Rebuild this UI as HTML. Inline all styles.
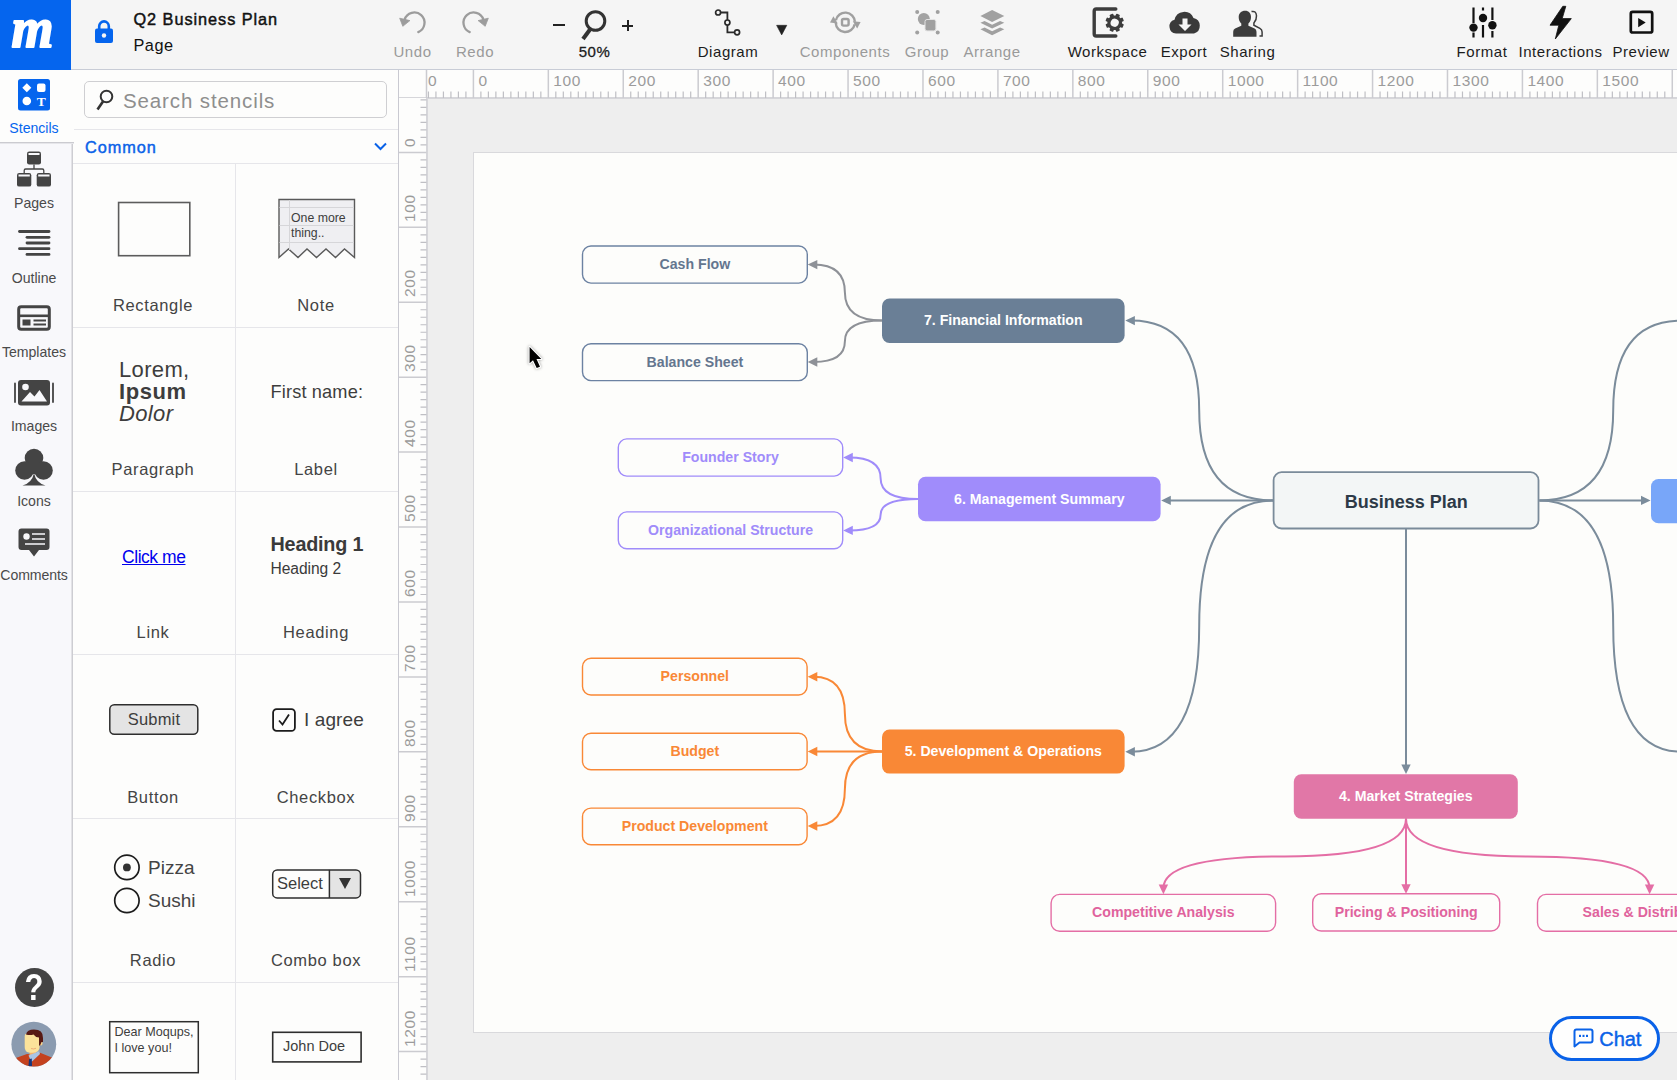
<!DOCTYPE html>
<html lang="en">
<head>
<meta charset="utf-8">
<title>Q2 Business Plan</title>
<style>
*{box-sizing:border-box;margin:0;padding:0}
html,body{width:1677px;height:1080px;overflow:hidden;background:#eeeeee;font-family:"Liberation Sans",sans-serif;color:#222}
.abs{position:absolute}
#top{position:absolute;left:0;top:0;width:1677px;height:70px;background:#f5f5f5;border-bottom:1px solid #c8ccd6}
#logo{position:absolute;left:0;top:0;width:71px;height:70px;background:#0565ee}
.tb{position:absolute;top:43px;font-size:15px;line-height:17px;white-space:nowrap;transform:translateX(-50%);color:#1c1c1c;letter-spacing:.55px}
.tb.dis{color:#9a9a9a}
.ti{position:absolute}
#nav{position:absolute;left:0;top:70px;width:73px;height:1010px;background:#f8f8fb;border-right:1px solid #cdcdd2;box-shadow:inset -2px 0 0 -1px #e2e2e6}
#navsel{position:absolute;left:0;top:70px;width:74px;height:73px;background:#fdfdfc;border-bottom:1px solid #cbcbd0;box-shadow:0 1px 0 #e6e6ea}
.nl{position:absolute;left:0;width:68px;text-align:center;font-size:14.1px;line-height:16px;color:#4a4a4a;white-space:nowrap}
#panel{position:absolute;left:73px;top:70px;width:325px;height:1010px;background:#fdfdfc}
#panelb{position:absolute;left:398px;top:70px;width:1px;height:1010px;background:#c9c9d1}
.hl{position:absolute;left:73px;width:325px;height:1px;background:#e6e6ea}
.cl{position:absolute;width:325px;left:73px}
.lab{position:absolute;width:162px;text-align:center;font-size:16.5px;line-height:20px;color:#444;letter-spacing:.65px;white-space:nowrap}
#hr{position:absolute;left:399px;top:70px;width:1278px;height:29px;background:#fdfdfc;border-bottom:2px solid #d6d6da}
#vr{position:absolute;left:399px;top:98px;width:29px;height:982px;background:#fdfdfc;border-right:2px solid #d6d6da}
.rl{position:absolute;font-size:15.500px;line-height:16px;color:#9b9b9b;white-space:nowrap;letter-spacing:.6px}
.vl{position:absolute;font-size:15.500px;line-height:16px;color:#9b9b9b;white-space:nowrap;letter-spacing:.6px;transform-origin:0 0;transform:rotate(-90deg)}
#page{position:absolute;left:473px;top:152px;width:1210px;height:881px;background:#fdfdfb;border:1px solid #d9d9dc}
svg text{font-family:"Liberation Sans",sans-serif}
</style>
</head>
<body>
<div id="page"></div>
<svg class="abs" style="left:0;top:0" width="1677" height="1080" viewBox="0 0 1677 1080" font-size="14.15" font-weight="bold"><path d="M1273.2 500.4Q1199.2 500.4 1199.2 410.5Q1199.2 320.6 1131.3 320.6" fill="none" stroke="#7b8c9b" stroke-width="2.0"/><path d="M1125.3 320.6L1134.9 315.9L1134.9 325.3Z" fill="#7b8c9b"/>
<path d="M1273.2 500.4L1167.2 500.4" fill="none" stroke="#7b8c9b" stroke-width="2.0"/><path d="M1161.2 500.4L1170.8 495.7L1170.8 505.1Z" fill="#7b8c9b"/>
<path d="M1273.2 500.4Q1199.2 500.4 1199.2 626.0Q1199.2 751.7 1131.3 751.7" fill="none" stroke="#7b8c9b" stroke-width="2.0"/><path d="M1125.3 751.7L1134.9 747.0L1134.9 756.4Z" fill="#7b8c9b"/>
<path d="M1539.3 500.4Q1613.2 500.4 1613.2 410.5Q1613.2 320.6 1681.2 320.6" fill="none" stroke="#7b8c9b" stroke-width="2.0"/><path d="M1687.2 320.6L1677.6 325.3L1677.6 315.9Z" fill="#7b8c9b"/>
<path d="M1539.3 500.4L1644.6 500.4" fill="none" stroke="#7b8c9b" stroke-width="2.0"/><path d="M1650.6 500.4L1641.0 505.1L1641.0 495.7Z" fill="#7b8c9b"/>
<path d="M1539.3 500.4Q1613.2 500.4 1613.2 626.0Q1613.2 751.7 1681.2 751.7" fill="none" stroke="#7b8c9b" stroke-width="2.0"/><path d="M1687.2 751.7L1677.6 756.4L1677.6 747.0Z" fill="#7b8c9b"/>
<path d="M1406.0 529.0L1406.0 768.0" fill="none" stroke="#7b8c9b" stroke-width="2.0"/><path d="M1406.0 774.0L1401.3 764.4L1410.7 764.4Z" fill="#7b8c9b"/>
<path d="M882.0 320.6Q844.9 320.6 844.9 292.6Q844.9 264.6 813.7 264.6" fill="none" stroke="#8e9197" stroke-width="2.0"/><path d="M807.7 264.6L817.3 259.9L817.3 269.3Z" fill="#8e9197"/>
<path d="M882.0 320.6Q844.9 320.6 844.9 341.3Q844.9 362.0 813.7 362.0" fill="none" stroke="#8e9197" stroke-width="2.0"/><path d="M807.7 362.0L817.3 357.3L817.3 366.7Z" fill="#8e9197"/>
<path d="M918.0 499.0Q880.6 499.0 880.6 478.2Q880.6 457.5 849.2 457.5" fill="none" stroke="#a08cfa" stroke-width="2.0"/><path d="M843.2 457.5L852.8 452.8L852.8 462.2Z" fill="#a08cfa"/>
<path d="M918.0 499.0Q880.6 499.0 880.6 514.7Q880.6 530.4 849.2 530.4" fill="none" stroke="#a08cfa" stroke-width="2.0"/><path d="M843.2 530.4L852.8 525.7L852.8 535.1Z" fill="#a08cfa"/>
<path d="M882.0 751.5Q844.9 751.5 844.9 714.1Q844.9 676.8 813.7 676.8" fill="none" stroke="#f98836" stroke-width="2.0"/><path d="M807.7 676.8L817.3 672.1L817.3 681.5Z" fill="#f98836"/>
<path d="M882.0 751.5L813.7 751.5" fill="none" stroke="#f98836" stroke-width="2.0"/><path d="M807.7 751.5L817.3 746.8L817.3 756.2Z" fill="#f98836"/>
<path d="M882.0 751.5Q844.9 751.5 844.9 788.8Q844.9 826.0 813.7 826.0" fill="none" stroke="#f98836" stroke-width="2.0"/><path d="M807.7 826.0L817.3 821.3L817.3 830.7Z" fill="#f98836"/>
<path d="M1406.0 818.5Q1406.0 856.4 1284.7 856.4Q1163.4 856.4 1163.4 888.2" fill="none" stroke="#e46ea5" stroke-width="2.0"/><path d="M1163.4 894.2L1158.7 884.6L1168.1 884.6Z" fill="#e46ea5"/>
<path d="M1406.0 818.5L1406.0 887.8" fill="none" stroke="#e46ea5" stroke-width="2.0"/><path d="M1406.0 893.8L1401.3 884.2L1410.7 884.2Z" fill="#e46ea5"/>
<path d="M1406.0 818.5Q1406.0 856.4 1527.8 856.4Q1649.6 856.4 1649.6 888.2" fill="none" stroke="#e46ea5" stroke-width="2.0"/><path d="M1649.6 894.2L1644.9 884.6L1654.3 884.6Z" fill="#e46ea5"/>
<rect x="582.5" y="246.0" width="224.8" height="37.1" rx="8.5" fill="#fdfdfb" stroke="#6c82a2" stroke-width="1.4"/><text x="694.9" y="269.1" text-anchor="middle" fill="#64768f">Cash Flow</text>
<rect x="582.5" y="343.7" width="224.8" height="36.9" rx="8.5" fill="#fdfdfb" stroke="#6c82a2" stroke-width="1.4"/><text x="694.9" y="366.6" text-anchor="middle" fill="#64768f">Balance Sheet</text>
<rect x="882.0" y="298.5" width="242.6" height="44.5" rx="7.5" fill="#6a7f96"/><text x="1003.3" y="325.2" text-anchor="middle" fill="#fff">7. Financial Information</text>
<rect x="618.3" y="438.9" width="224.4" height="37.2" rx="8.5" fill="#fdfdfb" stroke="#a08cfa" stroke-width="1.4"/><text x="730.5" y="462.0" text-anchor="middle" fill="#a08cfa">Founder Story</text>
<rect x="618.3" y="511.9" width="224.4" height="36.9" rx="8.5" fill="#fdfdfb" stroke="#a08cfa" stroke-width="1.4"/><text x="730.5" y="534.9" text-anchor="middle" fill="#a08cfa">Organizational Structure</text>
<rect x="918.0" y="476.7" width="242.6" height="44.6" rx="7.5" fill="#a08cfb"/><text x="1039.3" y="503.5" text-anchor="middle" fill="#fff">6. Management Summary</text>
<rect x="582.5" y="658.3" width="224.6" height="36.7" rx="8.5" fill="#fdfdfb" stroke="#f98836" stroke-width="1.4"/><text x="694.8" y="681.2" text-anchor="middle" fill="#f98836">Personnel</text>
<rect x="582.5" y="733.3" width="224.6" height="36.5" rx="8.5" fill="#fdfdfb" stroke="#f98836" stroke-width="1.4"/><text x="694.8" y="756.0" text-anchor="middle" fill="#f98836">Budget</text>
<rect x="582.5" y="808.1" width="224.6" height="36.6" rx="8.5" fill="#fdfdfb" stroke="#f98836" stroke-width="1.4"/><text x="694.8" y="830.9" text-anchor="middle" fill="#f98836">Product Development</text>
<rect x="882.0" y="729.6" width="242.6" height="44.0" rx="7.5" fill="#f98836"/><text x="1003.3" y="756.1" text-anchor="middle" fill="#fff">5. Development &amp; Operations</text>
<rect x="1293.8" y="774.2" width="224.0" height="44.6" rx="7.5" fill="#e177a7"/><text x="1405.8" y="801.0" text-anchor="middle" fill="#fff">4. Market Strategies</text>
<rect x="1051.1" y="894.4" width="224.5" height="36.9" rx="8.5" fill="#fdfdfb" stroke="#e46ea5" stroke-width="1.4"/><text x="1163.3" y="917.4" text-anchor="middle" fill="#e0639d">Competitive Analysis</text>
<rect x="1312.7" y="893.7" width="187.0" height="37.3" rx="8.5" fill="#fdfdfb" stroke="#e46ea5" stroke-width="1.4"/><text x="1406.2" y="916.9" text-anchor="middle" fill="#e0639d">Pricing &amp; Positioning</text>
<rect x="1537.5" y="894.4" width="224.6" height="36.9" rx="8.5" fill="#fdfdfb" stroke="#e46ea5" stroke-width="1.4"/><text x="1649.8" y="917.4" text-anchor="middle" fill="#e0639d">Sales &amp; Distribution</text>
<rect x="1651" y="479" width="60" height="44.300" rx="7.500" fill="#78a6f9"/>
<rect x="1273.600" y="472.200" width="264.900" height="56.300" rx="8" fill="#f3f6f6" stroke="#7a8b9a" stroke-width="1.800"/><text x="1406.300" y="507.800" text-anchor="middle" fill="#2d3a47" style="font-size:18px">Business Plan</text></svg>
<div id="hr"></div><div id="vr"></div>
<svg class="abs" style="left:0;top:0" width="1677" height="1080" viewBox="0 0 1677 1080"><path d="M428.44 91.5V98M435.93 91.5V98M443.43 91.5V98M450.92 91.5V98M458.41 91.5V98M465.91 91.5V98M480.89 91.5V98M488.39 91.5V98M495.88 91.5V98M503.37 91.5V98M510.87 91.5V98M518.36 91.5V98M525.85 91.5V98M533.34 91.5V98M540.84 91.5V98M555.82 91.5V98M563.32 91.5V98M570.81 91.5V98M578.30 91.5V98M585.79 91.5V98M593.29 91.5V98M600.78 91.5V98M608.27 91.5V98M615.77 91.5V98M630.75 91.5V98M638.25 91.5V98M645.74 91.5V98M653.23 91.5V98M660.73 91.5V98M668.22 91.5V98M675.71 91.5V98M683.20 91.5V98M690.70 91.5V98M705.68 91.5V98M713.18 91.5V98M720.67 91.5V98M728.16 91.5V98M735.65 91.5V98M743.15 91.5V98M750.64 91.5V98M758.13 91.5V98M765.63 91.5V98M780.61 91.5V98M788.11 91.5V98M795.60 91.5V98M803.09 91.5V98M810.59 91.5V98M818.08 91.5V98M825.57 91.5V98M833.06 91.5V98M840.56 91.5V98M855.54 91.5V98M863.04 91.5V98M870.53 91.5V98M878.02 91.5V98M885.52 91.5V98M893.01 91.5V98M900.50 91.5V98M907.99 91.5V98M915.49 91.5V98M930.47 91.5V98M937.97 91.5V98M945.46 91.5V98M952.95 91.5V98M960.45 91.5V98M967.94 91.5V98M975.43 91.5V98M982.92 91.5V98M990.42 91.5V98M1005.40 91.5V98M1012.90 91.5V98M1020.39 91.5V98M1027.88 91.5V98M1035.38 91.5V98M1042.87 91.5V98M1050.36 91.5V98M1057.85 91.5V98M1065.35 91.5V98M1080.33 91.5V98M1087.83 91.5V98M1095.32 91.5V98M1102.81 91.5V98M1110.30 91.5V98M1117.80 91.5V98M1125.29 91.5V98M1132.78 91.5V98M1140.28 91.5V98M1155.26 91.5V98M1162.76 91.5V98M1170.25 91.5V98M1177.74 91.5V98M1185.24 91.5V98M1192.73 91.5V98M1200.22 91.5V98M1207.71 91.5V98M1215.21 91.5V98M1230.19 91.5V98M1237.69 91.5V98M1245.18 91.5V98M1252.67 91.5V98M1260.16 91.5V98M1267.66 91.5V98M1275.15 91.5V98M1282.64 91.5V98M1290.14 91.5V98M1305.12 91.5V98M1312.62 91.5V98M1320.11 91.5V98M1327.60 91.5V98M1335.10 91.5V98M1342.59 91.5V98M1350.08 91.5V98M1357.57 91.5V98M1365.07 91.5V98M1380.05 91.5V98M1387.55 91.5V98M1395.04 91.5V98M1402.53 91.5V98M1410.03 91.5V98M1417.52 91.5V98M1425.01 91.5V98M1432.50 91.5V98M1440.00 91.5V98M1454.98 91.5V98M1462.48 91.5V98M1469.97 91.5V98M1477.46 91.5V98M1484.95 91.5V98M1492.45 91.5V98M1499.94 91.5V98M1507.43 91.5V98M1514.93 91.5V98M1529.91 91.5V98M1537.41 91.5V98M1544.90 91.5V98M1552.39 91.5V98M1559.89 91.5V98M1567.38 91.5V98M1574.87 91.5V98M1582.36 91.5V98M1589.86 91.5V98M1604.84 91.5V98M1612.34 91.5V98M1619.83 91.5V98M1627.32 91.5V98M1634.82 91.5V98M1642.31 91.5V98M1649.80 91.5V98M1657.29 91.5V98M1664.79 91.5V98" stroke="#bfbfc4" stroke-width="1.200" fill="none"/><path d="M426.5 70V98M473.40 70V98M548.33 70V98M623.26 70V98M698.19 70V98M773.12 70V98M848.05 70V98M922.98 70V98M997.91 70V98M1072.84 70V98M1147.77 70V98M1222.70 70V98M1297.63 70V98M1372.56 70V98M1447.49 70V98M1522.42 70V98M1597.35 70V98M1672.28 70V98" stroke="#cbcbd0" stroke-width="1.500" fill="none"/><path d="M420.500 99.95H426.500M420.500 107.44H426.500M420.500 114.94H426.500M420.500 122.43H426.500M420.500 129.92H426.500M420.500 137.41H426.500M420.500 144.91H426.500M420.500 159.89H426.500M420.500 167.39H426.500M420.500 174.88H426.500M420.500 182.37H426.500M420.500 189.87H426.500M420.500 197.36H426.500M420.500 204.85H426.500M420.500 212.34H426.500M420.500 219.84H426.500M420.500 234.82H426.500M420.500 242.32H426.500M420.500 249.81H426.500M420.500 257.30H426.500M420.500 264.80H426.500M420.500 272.29H426.500M420.500 279.78H426.500M420.500 287.27H426.500M420.500 294.77H426.500M420.500 309.75H426.500M420.500 317.25H426.500M420.500 324.74H426.500M420.500 332.23H426.500M420.500 339.73H426.500M420.500 347.22H426.500M420.500 354.71H426.500M420.500 362.20H426.500M420.500 369.70H426.500M420.500 384.68H426.500M420.500 392.18H426.500M420.500 399.67H426.500M420.500 407.16H426.500M420.500 414.65H426.500M420.500 422.15H426.500M420.500 429.64H426.500M420.500 437.13H426.500M420.500 444.63H426.500M420.500 459.61H426.500M420.500 467.11H426.500M420.500 474.60H426.500M420.500 482.09H426.500M420.500 489.59H426.500M420.500 497.08H426.500M420.500 504.57H426.500M420.500 512.06H426.500M420.500 519.56H426.500M420.500 534.54H426.500M420.500 542.04H426.500M420.500 549.53H426.500M420.500 557.02H426.500M420.500 564.52H426.500M420.500 572.01H426.500M420.500 579.50H426.500M420.500 586.99H426.500M420.500 594.49H426.500M420.500 609.47H426.500M420.500 616.97H426.500M420.500 624.46H426.500M420.500 631.95H426.500M420.500 639.45H426.500M420.500 646.94H426.500M420.500 654.43H426.500M420.500 661.92H426.500M420.500 669.42H426.500M420.500 684.40H426.500M420.500 691.90H426.500M420.500 699.39H426.500M420.500 706.88H426.500M420.500 714.38H426.500M420.500 721.87H426.500M420.500 729.36H426.500M420.500 736.85H426.500M420.500 744.35H426.500M420.500 759.33H426.500M420.500 766.83H426.500M420.500 774.32H426.500M420.500 781.81H426.500M420.500 789.30H426.500M420.500 796.80H426.500M420.500 804.29H426.500M420.500 811.78H426.500M420.500 819.28H426.500M420.500 834.26H426.500M420.500 841.76H426.500M420.500 849.25H426.500M420.500 856.74H426.500M420.500 864.24H426.500M420.500 871.73H426.500M420.500 879.22H426.500M420.500 886.71H426.500M420.500 894.21H426.500M420.500 909.19H426.500M420.500 916.69H426.500M420.500 924.18H426.500M420.500 931.67H426.500M420.500 939.17H426.500M420.500 946.66H426.500M420.500 954.15H426.500M420.500 961.64H426.500M420.500 969.14H426.500M420.500 984.12H426.500M420.500 991.62H426.500M420.500 999.11H426.500M420.500 1006.60H426.500M420.500 1014.10H426.500M420.500 1021.59H426.500M420.500 1029.08H426.500M420.500 1036.57H426.500M420.500 1044.07H426.500M420.500 1059.05H426.500M420.500 1066.55H426.500M420.500 1074.04H426.500" stroke="#bfbfc4" stroke-width="1.200" fill="none"/><path d="M399 152.40H426.500M399 227.33H426.500M399 302.26H426.500M399 377.19H426.500M399 452.12H426.500M399 527.05H426.500M399 601.98H426.500M399 676.91H426.500M399 751.84H426.500M399 826.77H426.500M399 901.70H426.500M399 976.63H426.500M399 1051.56H426.500" stroke="#cbcbd0" stroke-width="1.500" fill="none"/></svg>
<div class="rl" style="left:428px;top:73.3px">0</div>
<div class="rl" style="left:478.4px;top:73.3px">0</div>
<div class="rl" style="left:553.3px;top:73.3px">100</div>
<div class="rl" style="left:628.3px;top:73.3px">200</div>
<div class="rl" style="left:703.2px;top:73.3px">300</div>
<div class="rl" style="left:778.1px;top:73.3px">400</div>
<div class="rl" style="left:853.0px;top:73.3px">500</div>
<div class="rl" style="left:928.0px;top:73.3px">600</div>
<div class="rl" style="left:1002.9px;top:73.3px">700</div>
<div class="rl" style="left:1077.8px;top:73.3px">800</div>
<div class="rl" style="left:1152.8px;top:73.3px">900</div>
<div class="rl" style="left:1227.7px;top:73.3px">1000</div>
<div class="rl" style="left:1302.6px;top:73.3px">1100</div>
<div class="rl" style="left:1377.6px;top:73.3px">1200</div>
<div class="rl" style="left:1452.5px;top:73.3px">1300</div>
<div class="rl" style="left:1527.4px;top:73.3px">1400</div>
<div class="rl" style="left:1602.3px;top:73.3px">1500</div>
<div class="rl" style="left:1677.3px;top:73.3px">1600</div>
<div class="vl" style="left:401.6px;top:147.4px">0</div>
<div class="vl" style="left:401.6px;top:222.3px">100</div>
<div class="vl" style="left:401.6px;top:297.3px">200</div>
<div class="vl" style="left:401.6px;top:372.2px">300</div>
<div class="vl" style="left:401.6px;top:447.1px">400</div>
<div class="vl" style="left:401.6px;top:522.1px">500</div>
<div class="vl" style="left:401.6px;top:597.0px">600</div>
<div class="vl" style="left:401.6px;top:671.9px">700</div>
<div class="vl" style="left:401.6px;top:746.8px">800</div>
<div class="vl" style="left:401.6px;top:821.8px">900</div>
<div class="vl" style="left:401.6px;top:896.7px">1000</div>
<div class="vl" style="left:401.6px;top:971.6px">1100</div>
<div class="vl" style="left:401.6px;top:1046.6px">1200</div>
<div id="panel"></div>
<div id="panelb"></div>
<!-- search -->
<div class="abs" style="left:84px;top:81px;width:303px;height:37px;border:1px solid #cfcfd2;border-radius:5px;background:#fdfdfc"></div>
<svg class="abs" style="left:95px;top:88px" width="20" height="24" viewBox="0 0 20 24"><circle cx="11.500" cy="8.500" r="5.800" fill="none" stroke="#333" stroke-width="2"/><path d="M8 13.500L2.500 21.500" stroke="#333" stroke-width="2.600"/></svg>
<div class="abs" style="left:123px;top:88px;font-size:20.500px;line-height:26px;color:#8e8e8e;letter-spacing:.88px;white-space:nowrap">Search stencils</div>
<div class="hl" style="top:129px"></div>
<div class="abs" style="left:85px;top:137px;font-size:16.300px;line-height:20px;color:#0a62e8;letter-spacing:.95px;-webkit-text-stroke:.45px #0a62e8;white-space:nowrap">Common</div>
<svg class="abs" style="left:373px;top:141px" width="15" height="11" viewBox="0 0 15 11"><path d="M2 2.500L7.500 8L13 2.500" fill="none" stroke="#0a62e8" stroke-width="2"/></svg>
<div class="hl" style="top:163px"></div>
<div class="hl" style="top:327px"></div>
<div class="hl" style="top:491px"></div>
<div class="hl" style="top:654px"></div>
<div class="hl" style="top:818px"></div>
<div class="hl" style="top:982px"></div>
<div class="abs" style="left:235px;top:164px;width:1px;height:916px;background:#e6e6ea"></div>

<!-- row1 -->
<svg class="abs" style="left:115px;top:199px" width="80" height="60" viewBox="0 0 80 60"><rect x="3.600" y="3.500" width="71.200" height="53.200" fill="#fdfdfc" stroke="#5c5c5c" stroke-width="1.600"/></svg>
<div class="lab" style="left:72px;top:295px">Rectangle</div>
<svg class="abs" style="left:277px;top:197px" width="80" height="64" viewBox="0 0 80 64"><path d="M2 2.500H77.500V60.500L67.500 52L58.500 60.500L49 52L39.500 60.500L30 52L21 60.500L11.500 52L2 60.500Z" fill="#efeff2" stroke="#5a5a5a" stroke-width="1.400" stroke-linejoin="miter"/><path d="M2.500 10.500H77M2.500 28.500H77M2.500 45.500H77M12.500 3V53" stroke="#d6d6d9" stroke-width="1" fill="none"/><text x="14" y="25" style="font-size:12.300px" fill="#3d3d3d">One more</text><text x="14" y="40.300" style="font-size:12.300px" fill="#3d3d3d">thing..</text></svg>
<div class="lab" style="left:235px;top:295px">Note</div>

<!-- row2 -->
<div class="abs" style="left:119px;top:359px;font-size:22px;line-height:21.900px;color:#3d3d3d;white-space:nowrap;letter-spacing:.35px">Lorem,<br><b style="letter-spacing:.6px">Ipsum</b><br><i>Dolor</i></div>
<div class="lab" style="left:72px;top:459px">Paragraph</div>
<div class="abs" style="left:270.500px;top:381px;font-size:18.200px;line-height:22px;color:#3d3d3d;white-space:nowrap;letter-spacing:.15px">First name:</div>
<div class="lab" style="left:235px;top:459px">Label</div>

<!-- row3 -->
<div class="abs" style="left:122px;top:545.500px;font-size:17.500px;line-height:22px;color:#0000ee;text-decoration:underline;white-space:nowrap;letter-spacing:-.45px">Click me</div>
<div class="lab" style="left:72px;top:622px">Link</div>
<div class="abs" style="left:270.500px;top:531.500px;font-size:19.800px;line-height:24px;color:#3a3a3a;font-weight:bold;white-space:nowrap;letter-spacing:-.2px">Heading 1</div>
<div class="abs" style="left:270.500px;top:558px;font-size:15.600px;line-height:22px;color:#3a3a3a;white-space:nowrap;letter-spacing:-.05px">Heading 2</div>
<div class="lab" style="left:235px;top:622px">Heading</div>

<!-- row4 -->
<svg class="abs" style="left:107px;top:702px" width="94" height="35" viewBox="0 0 94 35"><rect x="2.800" y="2.800" width="88" height="29.400" rx="4.500" fill="#e4e4e4" stroke="#2e2e2e" stroke-width="1.500"/></svg><div class="abs" style="left:109px;top:704px;width:90px;height:31px;text-align:center;font-size:16.500px;line-height:30px;color:#3d3d3d;letter-spacing:.2px">Submit</div>
<div class="lab" style="left:72px;top:787px">Button</div>
<svg class="abs" style="left:270px;top:705.500px" width="28" height="28" viewBox="0 0 28 28"><rect x="3.100" y="3.100" width="21.800" height="21.800" rx="3.500" fill="#fdfdfc" stroke="#1c1c1c" stroke-width="1.800"/><path d="M9 14.500L12.500 18.500L19 8.500" fill="none" stroke="#1c1c1c" stroke-width="1.800"/></svg>
<div class="abs" style="left:304px;top:709px;font-size:19px;line-height:22px;color:#3d3d3d;white-space:nowrap;letter-spacing:.1px">I agree</div>
<div class="lab" style="left:235px;top:787px">Checkbox</div>

<!-- row5 -->
<svg class="abs" style="left:110px;top:850px" width="34" height="68" viewBox="0 0 34 68"><circle cx="16.900" cy="17.400" r="12.200" fill="#fdfdfc" stroke="#1c1c1c" stroke-width="1.700"/><circle cx="16.900" cy="17.400" r="3.900" fill="#333"/><circle cx="16.900" cy="50.500" r="12.200" fill="#fdfdfc" stroke="#1c1c1c" stroke-width="1.700"/></svg>
<div class="abs" style="left:148px;top:857px;font-size:19px;line-height:22px;color:#444;white-space:nowrap">Pizza</div>
<div class="abs" style="left:148px;top:890px;font-size:19px;line-height:22px;color:#444;white-space:nowrap">Sushi</div>
<div class="lab" style="left:72px;top:950px">Radio</div>
<svg class="abs" style="left:270px;top:867px" width="94" height="34" viewBox="0 0 94 34"><rect x="2.700" y="2.900" width="87.800" height="28" rx="4.500" fill="#fdfdfc"/><path d="M59.400 2.900H86Q90.500 2.900 90.500 7.400V26.400Q90.500 30.900 86 30.900H59.400Z" fill="#e4e4e4"/><rect x="2.700" y="2.900" width="87.800" height="28" rx="4.500" fill="none" stroke="#2e2e2e" stroke-width="1.500"/><path d="M59.400 2.900V30.900" stroke="#2e2e2e" stroke-width="1.500"/></svg>
<div class="abs" style="left:277px;top:873px;font-size:16.500px;line-height:21px;color:#3d3d3d;white-space:nowrap">Select</div>
<svg class="abs" style="left:338px;top:877px" width="14" height="13" viewBox="0 0 14 13"><path d="M1 1H13L7 12Z" fill="#333"/></svg>
<div class="lab" style="left:235px;top:950px">Combo box</div>

<!-- row6 -->
<svg class="abs" style="left:107px;top:1019px" width="94" height="58" viewBox="0 0 94 58"><rect x="2.700" y="2.700" width="88.600" height="51" fill="#fdfdfc" stroke="#2e2e2e" stroke-width="1.500"/></svg>
<div class="abs" style="left:114.500px;top:1025.300px;font-size:12.600px;line-height:15.500px;color:#3d3d3d;white-space:nowrap">Dear Moqups,<br>I love you!</div>
<svg class="abs" style="left:270px;top:1029px" width="94" height="38" viewBox="0 0 94 38"><rect x="2.700" y="3.300" width="88.400" height="29.600" fill="#fdfdfc" stroke="#2e2e2e" stroke-width="1.600"/></svg>
<div class="abs" style="left:283px;top:1037px;font-size:14.500px;line-height:18px;color:#3d3d3d;white-space:nowrap">John Doe</div>

<div id="nav"></div>
<div id="navsel"></div>
<!-- stencils -->
<svg class="abs" style="left:17px;top:78px" width="34" height="34" viewBox="0 0 34 34"><rect x="1" y="1" width="32" height="31.500" rx="2.500" fill="#0565ee"/><path d="M9.800 5.200L14.300 9.700L9.800 14.200L5.300 9.700Z" fill="#fff"/><rect x="20" y="5.500" width="8.500" height="8.500" rx="2" fill="#fff"/><circle cx="9.800" cy="23" r="4.300" fill="#fff"/><text x="24.300" y="28" text-anchor="middle" style="font-family:'Liberation Serif',serif;font-weight:bold;font-size:13.500px" fill="#fff">T</text></svg>
<div class="nl" style="top:120px;color:#0565ee">Stencils</div>
<!-- pages -->
<svg class="abs" style="left:15px;top:150px" width="38" height="38" viewBox="0 0 38 38"><g fill="#444"><rect x="12" y="1.500" width="14" height="13" rx="2.200"/><rect x="2" y="23" width="14.300" height="13.600" rx="2.200"/><rect x="21.700" y="23" width="14.300" height="13.600" rx="2.200"/></g><g fill="#f8f8fb"><rect x="13.500" y="3" width="11" height="2"/><rect x="3.500" y="24.500" width="11.300" height="2"/><rect x="23.200" y="24.500" width="11.300" height="2"/></g><path d="M19 14.500V19M9.200 23V20.500Q9.200 19 10.700 19H27.300Q28.800 19 28.800 20.500V23" fill="none" stroke="#444" stroke-width="1.300"/></svg>
<div class="nl" style="top:195px">Pages</div>
<!-- outline -->
<svg class="abs" style="left:17px;top:229px" width="34" height="28" viewBox="0 0 34 28"><g stroke="#444" stroke-width="2.800" stroke-linecap="round"><path d="M2.500 2.500H32"/><path d="M10 8.300H32"/><path d="M10 14H32"/><path d="M2.500 19.700H32"/><path d="M10 25.400H32"/></g></svg>
<div class="nl" style="top:270px">Outline</div>
<!-- templates -->
<svg class="abs" style="left:16px;top:304px" width="36" height="28" viewBox="0 0 36 28"><rect x="2.700" y="2.700" width="30.600" height="22.600" rx="2.500" fill="none" stroke="#444" stroke-width="3"/><path d="M3 11.800H33" stroke="#444" stroke-width="2.600"/><rect x="6.500" y="15.500" width="8" height="6" fill="#444"/><path d="M17.500 16.500H30M17.500 20.500H30" stroke="#444" stroke-width="1.800"/></svg>
<div class="nl" style="top:344px">Templates</div>
<!-- images -->
<svg class="abs" style="left:13px;top:378px" width="42" height="30" viewBox="0 0 42 30"><rect x="5" y="2" width="32" height="25.500" rx="3" fill="#444"/><path d="M2 5.500V24M40 5.500V24" stroke="#444" stroke-width="1.800" stroke-linecap="round"/><circle cx="12.500" cy="9" r="3.300" fill="#f8f8fb"/><path d="M8.500 23.500L17 14L21.500 18.500L26.500 12L34 23.500Z" fill="#f8f8fb"/></svg>
<div class="nl" style="top:418px">Images</div>
<!-- icons (club) -->
<svg class="abs" style="left:14px;top:447px" width="40" height="40" viewBox="0 0 40 40"><g fill="#444"><circle cx="20" cy="11" r="9.300"/><circle cx="10.500" cy="23.500" r="9.300"/><circle cx="29.500" cy="23.500" r="9.300"/><rect x="15" y="15" width="10" height="12"/><path d="M20 26Q18 36 8.500 38.500H31.500Q22 36 20 26Z"/></g></svg>
<div class="nl" style="top:493px">Icons</div>
<!-- comments -->
<svg class="abs" style="left:17px;top:527px" width="34" height="32" viewBox="0 0 34 32"><path d="M4.500 1.500H29.500Q32.500 1.500 32.500 4.500V20Q32.500 23 29.500 23H22L17 29.500L12 23H4.500Q1.500 23 1.500 20V4.500Q1.500 1.500 4.500 1.500Z" fill="#444"/><circle cx="9.500" cy="9.500" r="3.200" fill="#f8f8fb"/><path d="M15 7H28M15 12H28M8 17H28" stroke="#f8f8fb" stroke-width="1.700"/></svg>
<div class="nl" style="top:567px;letter-spacing:-.1px">Comments</div>
<!-- help -->
<div class="abs" style="left:14.500px;top:968px;width:39px;height:39px;border-radius:50%;background:#444;color:#fff;font-size:36px;font-weight:bold;line-height:40.500px;text-align:center"><span style="display:inline-block;transform:scaleX(.86)">?</span></div>
<!-- avatar -->
<svg class="abs" style="left:11px;top:1021px" width="46" height="46" viewBox="0 0 46 46"><defs><clipPath id="avc"><circle cx="22.800" cy="23.200" r="22.400"/></clipPath></defs><g clip-path="url(#avc)"><rect width="46" height="46" fill="#8b9bb0"/><path d="M2 38L16 33L21 33.500L28.500 31.500L42 37V46H2Z" fill="#c4421f"/><path d="M18.500 29H25V34L21 36.500L18.500 34Z" fill="#f3b06a"/><path d="M17.500 34.500L28.200 30.300L29 33L20.500 41Z" fill="#a9c4e4"/><path d="M18 38.200L20.800 37.500L21 45H17.500Z" fill="#16367c"/><path d="M13.700 15Q13.700 12.500 16 12.500H28.600V26Q28.600 31.700 22 31.700H19Q13.700 31.700 13.700 26Z" fill="#fbe29a"/><ellipse cx="30" cy="22.200" rx="1.500" ry="2.300" fill="#f6d38a"/><path d="M15 13.500Q16 8.600 23 8.600Q32.200 8.600 32 17V21L30.500 21L29 24.500L28 24.500V16.500Q24 16 22.500 13.500Q19 14.500 15 13.500Z" fill="#571a14"/><path d="M20 27.500Q22.500 28.500 25 27.300" stroke="#e9a070" stroke-width=".800" fill="none"/></g></svg>

<div id="top"></div>
<div id="logo">
<svg width="71" height="70" viewBox="0 0 71 70"><text x="11.500" y="46.800" style="font-family:'Liberation Serif',serif;font-style:italic;font-weight:bold;font-size:58px" fill="#fff" stroke="#fff" stroke-width="2" stroke-linejoin="round" textLength="42" lengthAdjust="spacingAndGlyphs">m</text></svg>
</div>
<svg class="ti" style="left:94px;top:19px" width="20" height="26" viewBox="0 0 20 26"><path d="M5.2 10V7.2a4.8 4.8 0 0 1 9.6 0V10" fill="none" stroke="#0565ee" stroke-width="2.6"/><rect x="1" y="9.5" width="18" height="14.5" rx="2" fill="#0565ee"/><circle cx="10" cy="16.5" r="2.2" fill="#f5f5f5"/></svg>
<div class="abs" style="left:133.500px;top:9.100px;font-size:16.300px;line-height:20px;color:#111;letter-spacing:.95px;white-space:nowrap;-webkit-text-stroke:.45px #111">Q2 Business Plan</div>
<div class="abs" style="left:133.500px;top:35px;font-size:16.300px;line-height:20px;color:#111;letter-spacing:.5px;white-space:nowrap">Page</div>

<!-- undo / redo -->
<svg class="ti" style="left:398px;top:10px" width="30" height="24" viewBox="0 0 30 24"><path d="M6.600 9.600A10.200 10.200 0 1 1 20.300 22.100" fill="none" stroke="#9c9c9c" stroke-width="2.300" stroke-linecap="round"/><path d="M1.700 8.200L11.900 10.600L4.800 16.300Z" fill="#9c9c9c" stroke="#9c9c9c" stroke-width=".800" stroke-linejoin="round"/></svg>
<div class="tb dis" style="left:412.5px">Undo</div>
<svg class="ti" style="left:460px;top:10px" width="30" height="24" viewBox="0 0 30 24"><g transform="translate(30,0) scale(-1,1)"><path d="M6.600 9.600A10.200 10.200 0 1 1 20.300 22.100" fill="none" stroke="#9c9c9c" stroke-width="2.300" stroke-linecap="round"/><path d="M1.700 8.200L11.900 10.600L4.800 16.300Z" fill="#9c9c9c" stroke="#9c9c9c" stroke-width=".800" stroke-linejoin="round"/></g></svg>
<div class="tb dis" style="left:475px">Redo</div>

<!-- zoom -->
<div class="abs" style="left:553px;top:24px;width:12px;height:2px;background:#222"></div>
<svg class="ti" style="left:578px;top:8px" width="32" height="34" viewBox="0 0 32 34"><circle cx="17.5" cy="13" r="9.3" fill="none" stroke="#333" stroke-width="3"/><path d="M12 21.5L5 31" stroke="#333" stroke-width="4" stroke-linecap="butt"/></svg>
<div class="abs" style="left:622px;top:24.800px;width:11px;height:2px;background:#222"></div>
<div class="abs" style="left:626.500px;top:20.300px;width:2px;height:11px;background:#222"></div>
<div class="tb" style="left:594.5px;-webkit-text-stroke:.3px #1c1c1c">50%</div>

<!-- diagram -->
<svg class="ti" style="left:712px;top:7px" width="32" height="32" viewBox="0 0 32 32"><path d="M6 5.500H15.400V25.300H25" fill="none" stroke="#2a2a2a" stroke-width="1.800"/><circle cx="6.100" cy="5.500" r="2.500" fill="#f5f5f5" stroke="#2a2a2a" stroke-width="1.700"/><circle cx="15.400" cy="15.500" r="2.500" fill="#f5f5f5" stroke="#2a2a2a" stroke-width="1.700"/><circle cx="25.100" cy="25.300" r="2.500" fill="#f5f5f5" stroke="#2a2a2a" stroke-width="1.700"/></svg>
<div class="tb" style="left:728px">Diagram</div>
<svg class="ti" style="left:775px;top:24px" width="14" height="12" viewBox="0 0 14 12"><path d="M1.600 1.300H11.800L6.700 10.900Z" fill="#222" stroke="#222" stroke-width=".600" stroke-linejoin="round"/></svg>

<!-- components -->
<svg class="ti" style="left:828px;top:8px" width="36" height="30" viewBox="0 0 36 30"><g fill="none" stroke="#a0a0a0" stroke-width="2.400"><path d="M7.9 12.3A9.600 9.600 0 0 1 26.9 13.8"/><path d="M26.7 16.3A9.600 9.600 0 0 1 7.7 14.8"/><rect x="14" y="11" width="6.600" height="6.600" rx="1.600"/></g><path d="M24.800 13.200L32.600 14.100L29.200 20.400Z" fill="#a0a0a0"/><path d="M9.800 15.400L2 14.500L5.400 8.200Z" fill="#a0a0a0"/></svg>
<div class="tb dis" style="left:845px">Components</div>

<!-- group -->
<svg class="ti" style="left:913px;top:9px" width="28" height="28" viewBox="0 0 28 28"><circle cx="10.800" cy="10.100" r="6" fill="#a3a3a3"/><rect x="12" y="10.500" width="10.900" height="11.400" rx="2" fill="#a0a0a0" stroke="#e4e4e4" stroke-width="1"/><g fill="#a0a0a0"><circle cx="4.200" cy="2.900" r="2"/><circle cx="24.700" cy="2.900" r="2"/><circle cx="4.200" cy="23.400" r="2"/><circle cx="24.700" cy="23.400" r="2"/></g></svg>
<div class="tb dis" style="left:927px">Group</div>

<!-- arrange -->
<svg class="ti" style="left:978px;top:9px" width="28" height="28" viewBox="0 0 28 28"><g fill="#a0a0a0"><path d="M2.400 7.100L14.100 1.100L26.300 7.100L14.100 13.100Z"/><path d="M2.400 13.700L6.600 11.900L14.100 15.700L22.100 11.900L26.300 13.700L14.100 19.600Z"/><path d="M2.400 20.200L6.600 18.400L14.100 22.200L22.100 18.400L26.300 20.200L14.100 26.200Z"/></g></svg>
<div class="tb dis" style="left:992px">Arrange</div>

<!-- workspace -->
<svg class="ti" style="left:1090px;top:5px" width="36" height="34" viewBox="0 0 36 34"><path d="M25.800 4H6.200Q4.200 4 4.200 6V29Q4.200 31 6.200 31H25.800" fill="none" stroke="#3c3c3c" stroke-width="3.400" stroke-linecap="round"/><g transform="translate(24.700,17.700) rotate(22.500)"><g fill="#3c3c3c"><rect x="-2" y="-9.200" width="4" height="18.400" rx=".800"/><rect x="-2" y="-9.200" width="4" height="18.400" rx=".800" transform="rotate(45)"/><rect x="-2" y="-9.200" width="4" height="18.400" rx=".800" transform="rotate(90)"/><rect x="-2" y="-9.200" width="4" height="18.400" rx=".800" transform="rotate(135)"/><circle r="7.300"/></g><circle r="4.100" fill="#f5f5f5"/></g></svg>
<div class="tb" style="left:1107.5px">Workspace</div>

<!-- export -->
<svg class="ti" style="left:1168px;top:10px" width="34" height="26" viewBox="0 0 34 26"><path d="M8 23.5A7 7 0 0 1 6.5 9.8A10 10 0 0 1 25.5 8A8 8 0 0 1 26 23.5Z" fill="#3a3a3a"/><path d="M14.5 8.5H19.5V14.5H23.5L17 21L10.5 14.5H14.5Z" fill="#f5f5f5"/></svg>
<div class="tb" style="left:1184px">Export</div>

<!-- sharing -->
<svg class="ti" style="left:1231px;top:9px" width="34" height="30" viewBox="0 0 34 30"><path d="M20.500 2.600q4.600-1.200 5 4.200q.200 4-2.600 7.200v2.200l6 3.200q2.200 1.200 2.200 3.600V27h-2.600" fill="none" stroke="#3c3c3c" stroke-width="1.500"/><path d="M14.200 1.700c3.600 0 5.800 2.600 5.800 6.300c0 2.800-.900 5.200-2.600 6.600v2.200l6.200 2.800q1.900.900 1.900 3.100V27.700H2.200V22.700q0-2.200 1.900-3.100l6.200-2.800v-2.200c-1.700-1.400-2.600-3.800-2.600-6.600c0-3.700 2.500-6.300 6.500-6.300Z" fill="#3c3c3c"/></svg>
<div class="tb" style="left:1247.5px">Sharing</div>

<!-- format -->
<svg class="ti" style="left:1468.500px;top:6px" width="30" height="34" viewBox="0 0 30 34"><g stroke="#111" stroke-width="2.200" fill="none"><path d="M4.500 1.500V17"/><path d="M4.500 26.500V31.500"/><path d="M14 1.500V4.500"/><path d="M14 19V31.500"/><path d="M23.400 1.500V14"/><path d="M23.400 25V31.500"/></g><circle cx="4.500" cy="21.600" r="4.200" fill="#111"/><circle cx="14" cy="12" r="4.200" fill="#111"/><circle cx="23.400" cy="19.200" r="4.200" fill="#111"/></svg>
<div class="tb" style="left:1482px">Format</div>

<!-- interactions -->
<svg class="ti" style="left:1547px;top:4px" width="28" height="38" viewBox="0 0 28 38"><path d="M15.800 2.300L3 21.200H11.800L8.300 35L24.300 14.600H15.200L18.800 2.300Z" fill="#111" stroke="#111" stroke-width=".800" stroke-linejoin="round"/></svg>
<div class="tb" style="left:1560.5px">Interactions</div>

<!-- preview -->
<svg class="ti" style="left:1627px;top:8px" width="30" height="30" viewBox="0 0 30 30"><rect x="3.800" y="3.900" width="21.400" height="20.600" rx="1.800" fill="none" stroke="#111" stroke-width="2.700"/><path d="M11.200 10L18.700 14.500L11.200 19.300Z" fill="#111"/></svg>
<div class="tb" style="left:1641px">Preview</div>

<!-- cursor -->
<svg class="abs" style="left:524px;top:342px;filter:drop-shadow(0 .8px 1.400px rgba(0,0,0,.38))" width="26" height="34" viewBox="0 0 26 34"><path d="M5.600 5V21.300L9 18.300L12.700 26L16 24.800L12.500 17H17.300Z" fill="#000" stroke="#fff" stroke-width="2.200" stroke-linejoin="round" paint-order="stroke"/></svg>
<!-- chat -->
<div class="abs" style="left:1548.700px;top:1015.500px;width:111px;height:45.500px;border:3px solid #0a62e8;border-radius:23px;background:#fefefe"></div>
<svg class="abs" style="left:1571px;top:1027px" width="24" height="22" viewBox="0 0 24 22"><path d="M5.500 2.500H19.500Q21.500 2.500 21.500 4.500V13.500Q21.500 15.500 19.500 15.500H8.500L3.500 19.500V4.500Q3.500 2.500 5.500 2.500Z" fill="none" stroke="#0a62e8" stroke-width="2" stroke-linejoin="round"/><g fill="#0a62e8"><rect x="8" y="7.800" width="2" height="2.200"/><rect x="11.500" y="7.800" width="2" height="2.200"/><rect x="15" y="7.800" width="2" height="2.200"/></g></svg>
<div class="abs" style="left:1599.300px;top:1026.700px;font-size:20px;line-height:24px;color:#0a62e8;white-space:nowrap;-webkit-text-stroke:.45px #0a62e8;letter-spacing:-.1px">Chat</div>

</body>
</html>
